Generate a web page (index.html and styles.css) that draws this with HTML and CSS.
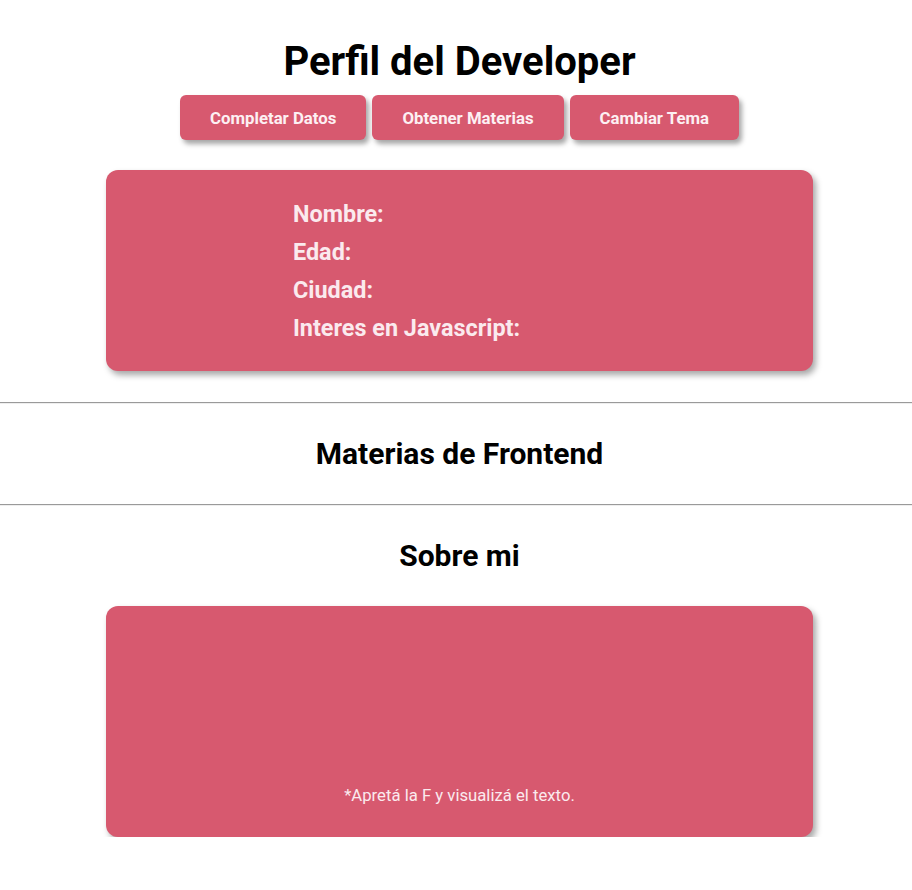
FILE: index.html
```html
<!DOCTYPE html>
<html lang="es">
<head>
<meta charset="utf-8">
<title>Perfil del Developer</title>
<link rel="stylesheet" href="styles.css">
</head>
<body>
<header class="header">
  <h1 class="title">Perfil del Developer</h1>
  <nav class="actions">
    <button class="btn">Completar Datos</button>
    <button class="btn">Obtener Materias</button>
    <button class="btn">Cambiar Tema</button>
  </nav>
</header>
<section class="card profile">
  <ul class="fields">
    <li>Nombre:</li>
    <li>Edad:</li>
    <li>Ciudad:</li>
    <li>Interes en Javascript:</li>
  </ul>
</section>
<hr class="divider divider-first">
<h2 class="section-title">Materias de Frontend</h2>
<hr class="divider">
<h2 class="section-title">Sobre mi</h2>
<section class="card about">
  <p class="hint">*Apretá la F y visualizá el texto.</p>
</section>
</body>
</html>
```
FILE: styles.css
```css
html, body {
  margin: 0;
  padding: 0;
  background: #ffffff;
}
body {
  font-family: Roboto, "Liberation Sans", sans-serif;
  color: #000;
}
.header {
  display: flex;
  flex-direction: column;
  align-items: center;
  padding: 40px 0 0 7px;
}
.title {
  margin: 0;
  font-size: 40px;
  font-weight: 700;
  line-height: 44px;
}
.actions {
  display: flex;
  gap: 6px;
  margin-top: 11px;
}
.btn {
  font-family: Roboto, "Liberation Sans", sans-serif;
  font-size: 16.8px;
  font-weight: 700;
  color: #fdf0f3;
  background: #d7596f;
  border: none;
  border-radius: 6px;
  height: 45px;
  padding: 0 30px;
  box-shadow: 3px 4px 5px rgba(0,0,0,0.35);
}
.card {
  width: 707px;
  margin-left: calc(50% - 350px);
  background: #d7596f;
  border-radius: 12px;
  box-shadow: 3px 4px 6px rgba(0,0,0,0.35);
  box-sizing: border-box;
  color: #fbeaee;
}
.profile {
  margin-top: 30px;
  height: 201px;
  padding: 25px 0 0 187px;
}
.fields {
  list-style: none;
  margin: 0;
  padding: 0;
  font-size: 23.4px;
  font-weight: 700;
}
.fields li {
  line-height: 38px;
}
.divider {
  margin: 31px 0 0;
  border: 0;
  border-top: 1px solid #9a9a9a;
  border-bottom: 1px solid #eeeeee;
}
.section-title {
  margin: 0;
  padding-left: 7px;
  text-align: center;
  font-size: 30px;
  font-weight: 700;
  line-height: 100px;
}
.section-title + .divider {
  margin-top: 0;
}
.about {
  height: 231px;
  display: flex;
  align-items: flex-end;
  justify-content: center;
  padding-bottom: 31px;
}
.hint {
  margin: 0;
  font-size: 16.7px;
  line-height: 20px;
}
```
